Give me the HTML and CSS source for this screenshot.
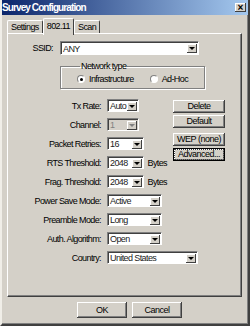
FILE: index.html
```html
<!DOCTYPE html>
<html lang="en">
<head>
    <meta charset="UTF-8">
    <title>Survey Configuration</title>
    <link rel="stylesheet" href="styles.css">
</head>
<body>
    <div class="window">
        <div class="titlebar">
            <span class="title">Survey Configuration</span>
            <span class="close-btn">&times;</span>
        </div>

        <div class="tabs">
            <span class="tab">Settings</span>
            <span class="tab active">802.11</span>
            <span class="tab">Scan</span>
        </div>

        <div class="panel">
            <div class="ssid-row">
                <label>SSID:</label>
                <div class="combo ssid"><span class="value">ANY</span><span class="arrow"></span></div>
            </div>

            <fieldset class="group">
                <legend>Network type</legend>
                <div class="radios">
                    <span class="radio checked"></span><span class="radio-label">Infrastructure</span>
                    <span class="radio"></span><span class="radio-label">Ad-Hoc</span>
                </div>
            </fieldset>

            <div class="fields">
                <label>Tx Rate:</label>
                <div class="cell"><div class="combo w32"><span class="value">Auto</span><span class="arrow"></span></div></div>

                <div class="actions">
                    <button class="btn">Delete</button>
                    <button class="btn">Default</button>
                    <button class="btn spaced">WEP (none)</button>
                    <button class="btn focused"><span>Advanced...</span></button>
                </div>

                <label>Channel:</label>
                <div class="cell"><div class="combo w32 disabled"><span class="value">1</span><span class="arrow"></span></div></div>

                <label>Packet Retries:</label>
                <div class="cell"><div class="combo w37"><span class="value">16</span><span class="arrow"></span></div></div>

                <label>RTS Threshold:</label>
                <div class="cell"><div class="combo w38"><span class="value">2048</span><span class="arrow"></span></div><span class="unit">Bytes</span></div>

                <label>Frag. Threshold:</label>
                <div class="cell"><div class="combo w38"><span class="value">2048</span><span class="arrow"></span></div><span class="unit">Bytes</span></div>

                <label>Power Save Mode:</label>
                <div class="cell"><div class="combo w55"><span class="value">Active</span><span class="arrow"></span></div></div>

                <label>Preamble Mode:</label>
                <div class="cell"><div class="combo w55"><span class="value">Long</span><span class="arrow"></span></div></div>

                <label>Auth. Algorithm:</label>
                <div class="cell"><div class="combo w55"><span class="value">Open</span><span class="arrow"></span></div></div>

                <label>Country:</label>
                <div class="cell wide"><div class="combo w91"><span class="value">United States</span><span class="arrow"></span></div></div>
            </div>
        </div>

        <div class="footer">
            <button class="btn big">OK</button>
            <button class="btn big">Cancel</button>
        </div>
    </div>
</body>
</html>
```

FILE: styles.css
```css
body {
    margin: 0;
    padding: 0;
    font-family: "Liberation Sans", Arial, sans-serif;
    font-size: 9px;
    letter-spacing: -0.6px;
    color: #000;
}
.window {
    width: 250px;
    height: 326px;
    box-sizing: border-box;
    background: #d4d0c8;
    border-left: 2px solid #f0eee8;
    border-right: 2px solid #404040;
    border-bottom: 2px solid #404040;
    box-shadow: inset -1px -1px #808080;
    overflow: hidden;
    white-space: nowrap;
}
.titlebar {
    height: 15px;
    margin-left: -2px;
    margin-right: -2px;
    padding: 0 4px 0 2px;
    display: flex;
    align-items: center;
    justify-content: space-between;
    background: linear-gradient(to right, #0a246a, #a6caf0);
}
.title {
    color: white;
    font-weight: bold;
    font-size: 10px;
    letter-spacing: -0.9px;
}
.close-btn {
    width: 11px;
    height: 9px;
    line-height: 9px;
    text-align: center;
    font-size: 10px;
    font-weight: bold;
    letter-spacing: 0;
    background: #d4d0c8;
    box-shadow: inset -1px -1px #404040, inset 1px 1px #fff;
}
.tabs {
    display: flex;
    align-items: flex-end;
    height: 15px;
    margin: 3px 0 0 5px;
    position: relative;
    z-index: 1;
}
.tab {
    height: 12px;
    line-height: 12px;
    padding: 0 3px;
    border: 1px solid #fff;
    border-right-color: #404040;
    border-bottom: none;
    border-radius: 2px 2px 0 0;
    background: #d4d0c8;
}
.tab.active {
    height: 16px;
    line-height: 15px;
    margin-bottom: -2px;
}
.panel {
    height: 264px;
    margin: 0 6px 0 5px;
    box-sizing: border-box;
    border: 1px solid #fff;
    border-right-color: #404040;
    border-bottom-color: #404040;
    box-shadow: inset -1px -1px #808080;
    padding: 7px 1px 0 1px;
}
.ssid-row {
    display: flex;
    align-items: center;
}
.ssid-row label {
    width: 44px;
    margin-right: 7px;
    text-align: right;
}
.combo {
    height: 13px;
    box-sizing: border-box;
    display: flex;
    align-items: center;
    justify-content: space-between;
    background: #fff;
    border: 1px solid #808080;
    border-right-color: #fff;
    border-bottom-color: #fff;
    box-shadow: inset 1px 1px #404040;
    padding: 1px 1px 0 2px;
    color: #222;
}
.combo.ssid {
    width: 139px;
    height: 14px;
}
.combo.disabled {
    background: #d4d0c8;
    color: #808080;
}
.arrow {
    width: 10px;
    height: 9px;
    flex-shrink: 0;
    box-sizing: border-box;
    background: #d4d0c8;
    box-shadow: inset -1px -1px #404040, inset 1px 1px #fff;
    display: flex;
    align-items: center;
    justify-content: center;
}
.arrow::after {
    content: "";
    border-left: 3px solid transparent;
    border-right: 3px solid transparent;
    border-top: 3px solid #000;
}
.combo.disabled .arrow::after {
    border-top-color: #808080;
}
.w32 { width: 32px; }
.w37 { width: 37px; }
.w38 { width: 38px; }
.w55 { width: 55px; }
.w91 { width: 91px; }

.group {
    width: 139px;
    box-sizing: border-box;
    margin: 6px 0 0 51px;
    padding: 3px 0 4px 16px;
    border: 1px solid #808080;
    box-shadow: 1px 1px #fff, inset 1px 1px #fff;
}
.group legend {
    padding: 0 1px;
    margin-left: 3px;
    line-height: 10px;
}
.radios {
    display: flex;
    align-items: center;
    height: 10px;
}
.radio {
    width: 8px;
    height: 8px;
    box-sizing: border-box;
    border-radius: 50%;
    background: #fff;
    border: 1px solid #808080;
    border-right-color: #fff;
    border-bottom-color: #fff;
    display: flex;
    align-items: center;
    justify-content: center;
}
.radio.checked::after {
    content: "";
    width: 3px;
    height: 3px;
    border-radius: 50%;
    background: #000;
}
.radio-label {
    margin-left: 4px;
    margin-right: 16px;
}

.fields {
    display: grid;
    grid-template-columns: 92px 60px 1fr;
    column-gap: 6px;
    row-gap: 6px;
    grid-auto-rows: 13px;
    margin-top: 10px;
}
.fields label {
    grid-column: 1;
    text-align: right;
    align-self: center;
}
.cell {
    display: flex;
    align-items: center;
    grid-column: 2;
}
.cell.wide {
    grid-column: 2 / span 2;
}
.unit {
    margin-left: 3px;
}
.actions {
    grid-column: 3;
    grid-row: 1 / span 4;
    display: flex;
    flex-direction: column;
    gap: 2px;
    padding-top: 1px;
}
.btn {
    width: 52px;
    height: 13px;
    padding: 0;
    font-family: inherit;
    font-size: 9px;
    letter-spacing: -0.5px;
    line-height: 11px;
    color: #000;
    background: #d4d0c8;
    border: none;
    box-shadow: inset -1px -1px #404040, inset 1px 1px #fff, inset -2px -2px #808080;
}
.btn.spaced {
    margin-top: 3px;
}
.btn.focused {
    box-shadow: inset 0 0 0 1px #000, inset -2px -2px #808080, inset 2px 2px #fff;
    padding: 2px;
}
.btn.focused span {
    display: block;
    height: 9px;
    line-height: 9px;
    outline: 1px dotted #404040;
}
.footer {
    display: flex;
    gap: 5px;
    margin: 5px 0 0 75px;
}
.btn.big {
    width: 50px;
    height: 16px;
}
```
